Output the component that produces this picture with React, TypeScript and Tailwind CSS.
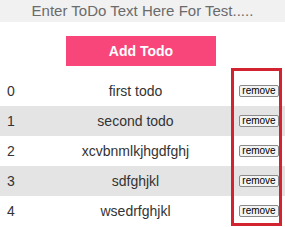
import React from "react";

const todos = ["first todo", "second todo", "xcvbnmlkjhgdfghj", "sdfghjkl", "wsedrfghjkl"];

export default function App() {
  return (
    <div className="relative w-[285px] h-[227px] bg-white overflow-hidden" style={{ fontFamily: '"Liberation Sans", Arial, sans-serif' }}>
      <input
        className="block w-full h-[22px] bg-[#f1f1f1] text-center text-[15px] text-[#333] placeholder:text-[#6b6b6b] outline-none border-0"
        placeholder="Enter ToDo Text Here For Test....."
      />
      <div className="flex justify-center pt-[14px]">
        <button className="w-[150px] h-[30px] bg-[#f8467b] text-white font-bold text-[14px] ml-[-3px]">Add Todo</button>
      </div>
      <div className="mt-[10px]">
        {todos.map((t, i) => (
          <div
            key={i}
            className={`grid grid-cols-[32px_1fr_50px] items-center h-[30px] text-[14px] text-[#333] ${i % 2 === 1 ? "bg-[#e4e4e4]" : "bg-white"}`}
          >
            <span className="pl-[7px]">{i}</span>
            <span className="text-center pl-[4px]">{t}</span>
            <span className="flex pl-[4px]">
              <button className="h-[12px] w-[40px] px-0 flex items-center justify-center border border-[#8a8a8a] rounded-[2px] bg-[#f4f4f4] text-[10px] leading-none text-black">
                remove
              </button>
            </span>
          </div>
        ))}
      </div>
      <div className="absolute left-[231px] top-[68px] w-[51px] h-[158px] border-[3px] border-[#d32330]" />
    </div>
  );
}
